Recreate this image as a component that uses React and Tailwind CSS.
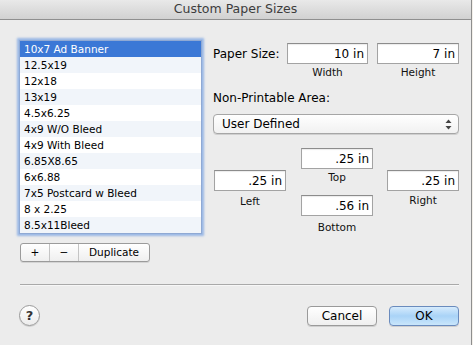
import React from 'react';

const sizes = [
  '10x7 Ad Banner',
  '12.5x19',
  '12x18',
  '13x19',
  '4.5x6.25',
  '4x9 W/O Bleed',
  '4x9 With Bleed',
  '6.85X8.65',
  '6x6.88',
  '7x5 Postcard w Bleed',
  '8 x 2.25',
  '8.5x11Bleed',
];

const Field = ({ value, className = '' }) => (
  <div
    className={`h-[21px] bg-white border border-[#a3a3a3] border-t-[#8c8c8c] shadow-[inset_0_1px_1px_rgba(0,0,0,0.08)] flex items-center justify-end pr-[3px] text-[12px] text-black ${className}`}
  >
    {value}
  </div>
);

const Caption = ({ children, className = '' }) => (
  <div className={`h-[12px] leading-[12px] text-[10.5px] text-[#111] text-center ${className}`}>{children}</div>
);

export default function App() {
  return (
    <div className="w-[473px] h-[345px] flex overflow-hidden bg-white" style={{ fontFamily: '"DejaVu Sans", sans-serif' }}>
      <div className="w-[472px] h-full flex flex-col bg-[#ececec] border-r border-[#8e8e8e]">
        {/* title bar */}
        <div className="h-[20px] shrink-0 flex items-center justify-center bg-gradient-to-b from-[#e9e9e9] to-[#d1d1d1] border-b border-[#8f8f8f] text-[12.5px] text-[#3c3c3c]">
          Custom Paper Sizes
        </div>

        <div className="flex flex-col pl-[19px] pr-[12px]">
          <div className="flex gap-[11px]">
            {/* left: list */}
            <div className="w-[183px] flex flex-col pt-[20px]">
              <div className="h-[194px] border border-[#8fa9d4] bg-white shadow-[0_0_2px_2px_rgba(120,162,226,0.7)]">
                {sizes.map((s, i) => (
                  <div
                    key={s}
                    className={`h-[16px] leading-[16px] pl-[4px] text-[10.5px] whitespace-nowrap ${
                      i === 0 ? 'bg-[#3b78d6] text-white' : i % 2 === 1 ? 'bg-[#f1f5fa] text-black' : 'bg-white text-black'
                    }`}
                  >
                    {s}
                  </div>
                ))}
              </div>
              <div className="mt-[9px] ml-[1px] w-[130px] h-[19px] flex rounded-[3px] border border-[#9b9b9b] bg-gradient-to-b from-white to-[#efefef] shadow-[0_1px_0_rgba(0,0,0,0.1)] text-[10.5px] text-black">
                <div className="w-[29px] flex items-center justify-center border-r border-[#c4c4c4]">+</div>
                <div className="w-[29px] flex items-center justify-center border-r border-[#c4c4c4]">−</div>
                <div className="flex-1 flex items-center justify-center">Duplicate</div>
              </div>
            </div>

            {/* right: settings */}
            <div className="w-[246px] flex flex-col pt-[23px]">
              <div className="flex items-center">
                <div className="w-[74px] text-[12px] text-black">Paper Size:</div>
                <div className="flex flex-col w-[81px]">
                  <Field value="10 in" />
                </div>
                <div className="flex flex-col w-[82px] ml-[9px]">
                  <Field value="7 in" />
                </div>
              </div>
              <div className="flex mt-[2px]">
                <Caption className="ml-[74px] w-[81px]">Width</Caption>
                <Caption className="ml-[9px] w-[82px]">Height</Caption>
              </div>

              <div className="mt-[12px] h-[16px] leading-[16px] text-[12px] text-black">Non-Printable Area:</div>

              <div className="mt-[8px] h-[20px] flex items-center justify-between rounded-[4px] border border-[#a6a6a6] bg-gradient-to-b from-white to-[#f1f1f1] shadow-[0_1px_0_rgba(0,0,0,0.12)] pl-[8px] pr-[6px] text-[12px] text-black">
                <span>User Defined</span>
                <svg width="7" height="11" viewBox="0 0 7 11">
                  <path d="M3.5 0.5 L6.5 4 L0.5 4 Z" fill="#444" />
                  <path d="M3.5 10.5 L6.5 7 L0.5 7 Z" fill="#444" />
                </svg>
              </div>

              <div className="mt-[14px] flex">
                <div className="w-[72px] ml-[1px] flex flex-col pt-[22px]">
                  <Field value=".25 in" />
                  <Caption className="mt-[4px]">Left</Caption>
                </div>
                <div className="w-[72px] ml-[15px] flex flex-col">
                  <Field value=".25 in" />
                  <Caption className="mt-[2px]">Top</Caption>
                  <Field value=".56 in" className="mt-[12px]" />
                  <Caption className="mt-[5px]">Bottom</Caption>
                </div>
                <div className="w-[72px] ml-[14px] flex flex-col pt-[22px]">
                  <Field value=".25 in" />
                  <Caption className="mt-[3px]">Right</Caption>
                </div>
              </div>
            </div>
          </div>

          <div className="mt-[22px] ml-[1px] h-[1px] bg-[#a9a9a9] shadow-[0_1px_0_#f7f7f7]" />

          <div className="mt-[20px] flex items-center justify-between">
            <div className="w-[21px] h-[21px] rounded-full border border-[#9a9a9a] bg-gradient-to-b from-white to-[#ececec] shadow-[0_1px_0_rgba(0,0,0,0.12)] flex items-center justify-center text-[13px] font-semibold text-[#333]">
              ?
            </div>
            <div className="flex gap-[12px]">
              <div className="w-[70px] h-[20px] rounded-[4px] border border-[#9a9a9a] bg-gradient-to-b from-white to-[#efefef] shadow-[0_1px_0_rgba(0,0,0,0.12)] flex items-center justify-center text-[12px] text-black">
                Cancel
              </div>
              <div className="w-[70px] h-[20px] rounded-[4px] border border-[#6a8bbd] bg-gradient-to-b from-[#d6ebfc] via-[#a9d3f7] to-[#c9e6fb] shadow-[0_1px_0_rgba(0,0,0,0.12)] flex items-center justify-center text-[12px] text-black">
                OK
              </div>
            </div>
          </div>
        </div>
      </div>
      <div className="flex-1 bg-[#f3f0ea]" />
    </div>
  );
}
